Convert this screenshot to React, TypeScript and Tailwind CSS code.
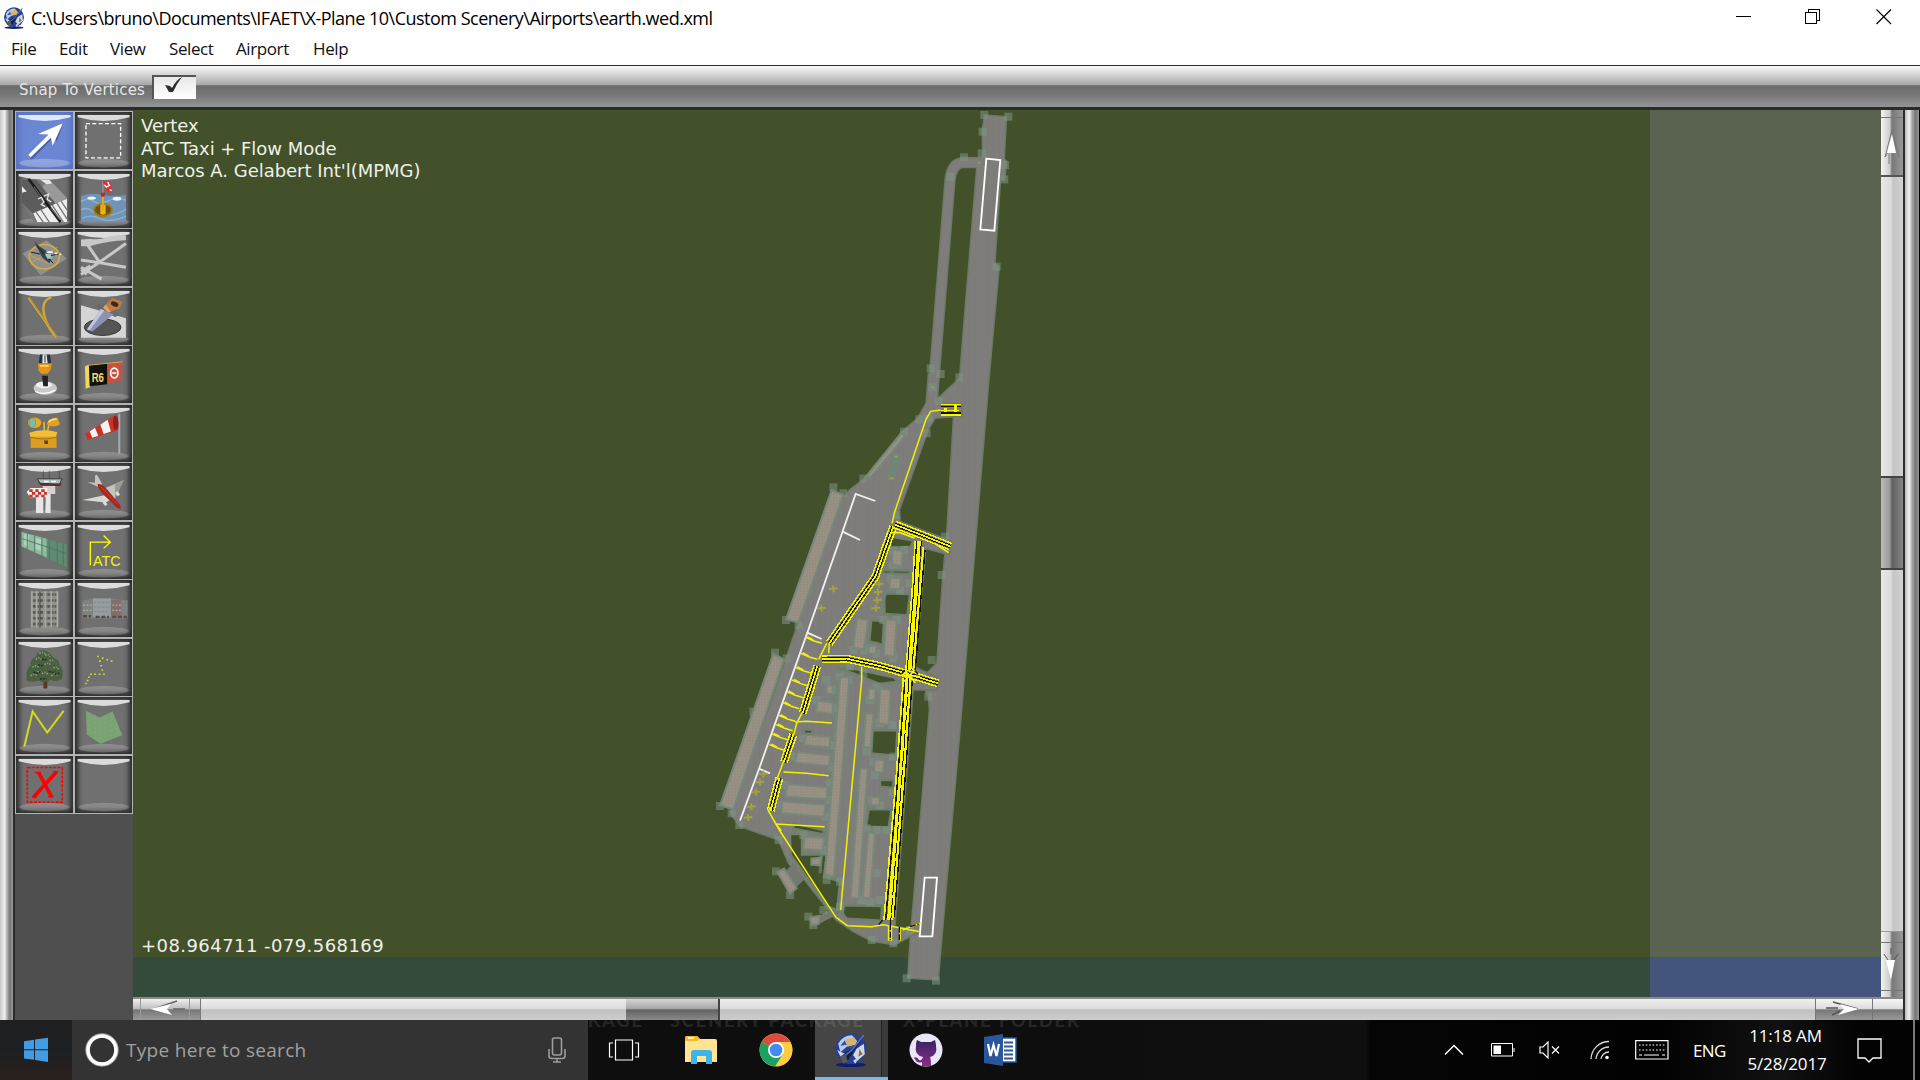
import type { ReactNode } from "react";

const MENUS = [
    { label: "File", width: "w-[48px]" },
    { label: "Edit", width: "w-[51px]" },
    { label: "View", width: "w-[59px]" },
    { label: "Select", width: "w-[67px]" },
    { label: "Airport", width: "w-[77px]" },
    { label: "Help", width: "w-[50px]" },
];

// Every tool picture is drawn in a 172 x 173 box
const TOOLS: { name: string; art: ReactNode }[] = [
    {
        name: "vertex",
        art: (
            <g>
                <path d="M43 140 L108 68 L90 62 L143 33 L122 90 L114 76 L48 144 Z" fill="#223a80" opacity=".5" />
                <path d="M37 130 L98 68 L66 67 L141 34 L110 102 L105 78 L44 137 Z" fill="#fff" />
            </g>
        ),
    },
    {
        name: "marquee",
        art: <rect x="33" y="35" width="104" height="104" fill="none" stroke="#fff" strokeWidth="4" strokeDasharray="12 7" />,
    },
    {
        name: "runway",
        art: (
            <g>
                <path d="M18 28 L100 24 L153 82 L153 155 L54 155 L18 96 Z" fill="#777" />
                <path d="M100 26 L153 82 L110 104 L70 58 Z" fill="#999" />
                <path d="M18 28 L60 26 L130 112 L52 130 L18 96 Z" fill="#5c5c5c" />
                <path d="M18 46 L32 62 L18 66 Z M72 26 L100 26 L108 38 L92 40 Z" fill="#e8e8e8" />
                <path d="M52 128 L153 84 L153 155 L64 155 Z" fill="#eee" />
                <path d="M58 122 L82 155 M74 116 L100 155 M108 102 L142 155 M122 96 L153 145 M136 92 L153 118" stroke="#777" strokeWidth="4" />
                <path d="M38 24 L134 155" stroke="#1c1c1c" strokeWidth="8" />
                <path d="M54 48 L82 86 M104 112 L132 148" stroke="#999" strokeWidth="2" />
                <path d="M66 85 l10 -5 l8 14 l-8 8 l12 6 M84 76 l14 -6 l-4 16 l12 8" fill="none" stroke="#e6e6e6" strokeWidth="4" />
            </g>
        ),
    },
    {
        name: "sealane",
        art: (
            <g>
                <path d="M18 76 Q50 64 84 72 T153 72 L153 154 L18 154 Z" fill="#6e94b8" />
                <path d="M18 92 q20 -12 38 0 t40 0 t57 -4 M18 118 q20 -10 34 4 t46 12 t55 -18 M22 144 q26 -14 50 0 t80 -6" fill="none" stroke="#91b0cb" strokeWidth="4" />
                <ellipse cx="50" cy="82" rx="13" ry="5" fill="#f0f5f8" />
                <ellipse cx="126" cy="84" rx="13" ry="6" fill="#f0f5f8" />
                <ellipse cx="84" cy="118" rx="27" ry="19" fill="#6b5316" stroke="#a37c18" strokeWidth="6" />
                <path d="M76 102 h16 v28 q-8 6 -16 0 Z" fill="#f0b512" />
                <path d="M84 76 V120" stroke="#e5a915" strokeWidth="6" />
                <path d="M76 66 h15 l-3 12 h-9 Z" fill="#b92a22" />
                <path d="M84 30 V66" stroke="#bbb" strokeWidth="2" />
                <path d="M82 28 L110 38 L108 66 L94 60 Z" fill="#df3030" />
                <path d="M98 34 l6 10 l-10 4 M88 42 l8 8 M104 56 l6 4" stroke="#fff" strokeWidth="4" fill="none" />
            </g>
        ),
    },
    {
        name: "helipad",
        art: (
            <g>
                <path d="M20 74 L92 34 L152 90 L74 140 Z" fill="#909090" />
                <ellipse cx="85" cy="84" rx="45" ry="37" fill="none" stroke="#d8ac3c" strokeWidth="5" />
                <path d="M50 100 L124 56 M46 82 L100 106" stroke="#c9a446" strokeWidth="3" />
                <path d="M54 36 L70 52 L94 68 L106 92 L100 104 L78 86 L66 60 Z" fill="#344548" />
                <path d="M72 76 L44 70 M98 82 L136 74 M60 50 L112 104" stroke="#222" strokeWidth="3" />
                <path d="M86 74 l18 2 l4 14 l-14 0 Z" fill="#a8c4cc" />
                <path d="M92 70 h18 M116 74 h8 M130 76 h6" stroke="#f4f4f4" strokeWidth="5" />
            </g>
        ),
    },
    {
        name: "taxiway",
        art: (
            <g>
                <path d="M18 32 L46 30 Q80 34 104 22 L134 18 L153 20 L153 34 L128 36 Q80 42 44 52 L18 52 Z" fill="#c8c8c8" />
                <path d="M36 46 L72 98 M153 44 L72 102 L18 138 M18 94 L72 102 L153 116 M18 116 L80 152 M18 128 L46 112" stroke="#c8c8c8" strokeWidth="9" fill="none" />
                <path d="M18 120 h30 l-16 22 Z" fill="#c8c8c8" />
            </g>
        ),
    },
    {
        name: "linear feature",
        art: (
            <g fill="none" stroke="#d3aa35" strokeWidth="7">
                <path d="M38 30 L122 150" />
                <path d="M106 28 Q76 38 84 78 Q92 116 116 144" />
                <path d="M40 30 L124 150" stroke="#8d6f1c" strokeWidth="1.5" />
            </g>
        ),
    },
    {
        name: "hole",
        art: (
            <g>
                <path d="M18 52 L153 92 L153 151 L18 151 Z" fill="#d5d5d5" />
                <path d="M60 54 L110 40 L130 84 L120 88 Z" fill="#6a6a6a" />
                <ellipse cx="83" cy="119" rx="55" ry="25" fill="#555" stroke="#333" strokeWidth="3" />
                <path d="M78 64 L116 80 L52 132 L36 126 Z" fill="#8f90b5" />
                <path d="M78 64 L88 68 L44 128 L36 126 Z" fill="#c5c6dc" />
                <path d="M92 50 L112 30 L142 42 L134 62 L106 72 Z" fill="#bd7c42" />
                <ellipse cx="119" cy="49" rx="12" ry="7" transform="rotate(24 119 49)" fill="#3b2a1d" />
                <path d="M92 50 L108 72 L100 74 L84 60 Z" fill="#e0a468" />
            </g>
        ),
    },
    {
        name: "tower viewpoint",
        art: (
            <g>
                <ellipse cx="88" cy="128" rx="35" ry="20" fill="#c9c9c9" />
                <ellipse cx="84" cy="118" rx="24" ry="10" fill="#efefef" />
                <path d="M58 138 q28 14 60 -4" fill="none" stroke="#fff" strokeWidth="4" />
                <path d="M78 90 h18 v32 h-14 Z" fill="#222" />
                <path d="M66 52 h42 l-4 20 l-10 12 h-18 l-8 -10 Z" fill="#e5961b" />
                <path d="M72 60 h26" stroke="#ffd877" strokeWidth="5" />
                <path d="M72 26 h30 l4 26 h-38 Z" fill="#26323f" />
                <path d="M80 26 h12 l3 26 h-16 Z" fill="#e4e8ec" />
                <path d="M87 28 v22" stroke="#26323f" strokeWidth="3" />
            </g>
        ),
    },
    {
        name: "sign",
        art: (
            <g>
                <path d="M30 62 L42 56 L46 124 L32 130 Z" fill="#f0d95e" />
                <path d="M34 60 L143 48" stroke="#d8b64a" strokeWidth="4" />
                <path d="M42 60 L97 54 L97 116 L44 122 Z" fill="#12120c" />
                <path d="M97 54 L143 49 L141 104 L97 115 Z" fill="#c65340" />
                <text x="50" y="108" fontSize="40" fontWeight="700" textLength="37" lengthAdjust="spacingAndGlyphs" fill="#f1dd7d" className="font-['Liberation_Sans',sans-serif]">
                    R6
                </text>
                <ellipse cx="118" cy="82" rx="11" ry="15" fill="none" stroke="#fff" strokeWidth="5" />
                <path d="M112 82 h12" stroke="#fff" strokeWidth="5" />
            </g>
        ),
    },
    {
        name: "light fixture",
        art: (
            <g>
                <path d="M84 52 L86 92 M100 56 L92 92" stroke="#e8b82f" strokeWidth="5" />
                <ellipse cx="56" cy="54" rx="20" ry="16" fill="#e8aa22" />
                <ellipse cx="49" cy="54" rx="10" ry="14" fill="#6ebfb5" stroke="#c58a16" strokeWidth="3" />
                <path d="M92 58 Q96 40 124 38 L132 58 Q112 72 92 58 Z" fill="#e3a01d" />
                <path d="M98 52 Q104 44 122 42" fill="none" stroke="#ffdb68" strokeWidth="5" />
                <path d="M40 84 Q80 70 124 82 L120 98 L44 98 Z" fill="#f3bf38" />
                <path d="M44 96 H122 V130 H44 Z" fill="#db9e1e" />
                <path d="M44 98 Q80 108 122 98" stroke="#8a5c0d" strokeWidth="2" fill="none" />
                <path d="M84 108 h12 v10 h-10 Z" fill="#59400f" />
            </g>
        ),
    },
    {
        name: "windsock",
        art: (
            <g>
                <path d="M133 26 V148" stroke="#a3acb4" strokeWidth="6" />
                <path d="M30 88 L118 32 Q134 36 130 76 L38 106 Z" fill="#c93224" />
                <path d="M44 80 L60 69 L70 93 L52 99 Z M76 60 L98 45 L108 80 L86 88 Z" fill="#f2f2f2" />
                <ellipse cx="122" cy="54" rx="8" ry="22" fill="#8c2118" />
            </g>
        ),
    },
    {
        name: "tower",
        art: (
            <g>
                <path d="M82 24 V50 M100 24 V50 M130 24 V50" stroke="#444" strokeWidth="2" />
                <path d="M60 96 H82 V152 H60 Z M90 82 H104 V152 H88 Z" fill="#e6e6e6" />
                <path d="M80 70 H118 V94 H84 Z" fill="#d2d2d2" />
                <path d="M64 48 H138 L130 66 H76 Z" fill="#a9c1c4" stroke="#333" strokeWidth="3" />
                <path d="M66 60 L138 62 L132 70 L76 68 Z" fill="#6e2924" />
                <path d="M84 56 h14 M106 56 h14" stroke="#fff" strokeWidth="5" />
                <path d="M32 88 L44 76 H94 V104 H42 Z" fill="#f5eded" />
                <path d="M40 84 h10 m8 0 h10 m8 0 h10 M48 92 h10 m8 0 h10 m8 0 h9 M40 100 h10 m8 0 h10 m8 0 h10" stroke="#c7342b" strokeWidth="8" />
            </g>
        ),
    },
    {
        name: "ramp start",
        art: (
            <g>
                <path d="M82 80 L146 52 L120 108 L104 104 Z" fill="#c4c4bc" />
                <path d="M120 64 L146 52 L120 108 Z" fill="#9b9b94" />
                <path d="M22 112 L88 98 L106 112 L92 120 Z" fill="#d9d9d2" />
                <path d="M60 38 L66 36 L82 64 L68 72 L38 58 L60 60 Z" fill="#c9c2b8" />
                <path d="M68 64 Q80 62 96 80 L136 128 L138 140 L126 136 L84 94 Q68 78 68 64 Z" fill="#a8261d" />
                <path d="M78 72 L128 126" stroke="#cf5548" strokeWidth="2" />
                <path d="M86 118 l8 10 M124 88 l8 10" stroke="#ddd" strokeWidth="9" />
            </g>
        ),
    },
    {
        name: "facade",
        art: (
            <g>
                <path d="M17 30 L153 68 L153 138 L17 74 Z" fill="#5f8b74" />
                <path d="M17 30 L92 51 L92 108 L17 74 Z" fill="#8dbaa0" />
                <path d="M24 36 L40 40 L36 76 L24 70 Z M60 48 L76 52 L74 88 L58 82 Z" fill="#abd3ba" />
                <path d="M17 50 L153 96 M34 34 V82 M56 40 V92 M78 48 V104 M100 54 V114 M124 60 V124 M142 66 V132" stroke="#48735c" strokeWidth="2.5" />
            </g>
        ),
    },
    {
        name: "atc",
        art: (
            <g>
                <path d="M46 131 V61 H105 M86 41 L106 61 L86 80" fill="none" stroke="#ffff00" strokeWidth="4" />
                <text x="54" y="132" fontSize="45" textLength="83" lengthAdjust="spacingAndGlyphs" fill="#f3f312" className="font-['Liberation_Sans',sans-serif]">
                    ATC
                </text>
            </g>
        ),
    },
    {
        name: "building",
        art: (
            <g>
                <path d="M44 34 L128 34 L128 142 L44 144 Z" fill="#8f918a" />
                <path d="M50 44 h72 M50 62 h72 M50 80 h72 M50 98 h72 M50 116 h72 M50 134 h72" stroke="#585b57" strokeWidth="8" strokeDasharray="9 5 5 3" />
                <path d="M48 34 V144 M62 34 V144 M88 34 V144 M106 34 V144 M124 34 V144" stroke="#acaea5" strokeWidth="4" />
                <path d="M72 36 V144" stroke="#444" strokeWidth="3" />
            </g>
        ),
    },
    {
        name: "agp building",
        art: (
            <g>
                <path d="M22 62 L54 56 L112 56 L158 62 V116 H22 Z" fill="#80827f" />
                <path d="M54 56 H108 V112 H54 Z" fill="#969da2" />
                <path d="M108 60 H138 V112 H108 Z" fill="#846e6b" />
                <path d="M56 68 h50 M56 82 h50 M56 96 h50" stroke="#868e94" strokeWidth="4" strokeDasharray="8 4" />
                <path d="M24 76 h28 M24 92 h28 M112 76 h26 M112 92 h26" stroke="#a9a9a5" strokeWidth="4" strokeDasharray="6 4" />
                <path d="M24 110 h24 M62 112 h40 M112 112 h44" stroke="#574d47" strokeWidth="7" strokeDasharray="12 5" />
            </g>
        ),
    },
    {
        name: "forest",
        art: (
            <g>
                <path d="M84 110 h10 v40 h-12 Z" fill="#5b3723" />
                <path d="M32 112 Q30 90 44 82 Q40 62 58 56 Q66 34 84 34 Q104 38 112 58 Q130 60 130 78 Q146 92 138 122 Q122 132 104 124 Q86 136 68 126 Q48 134 32 126 Z" fill="#4b6041" />
                <path
                    d="M60 62 q8 -10 16 0 M88 50 q8 -8 14 4 M50 86 q10 -10 20 2 M86 78 q10 -10 20 2 M112 88 q10 -8 16 4 M44 112 q10 -10 20 0 M78 106 q10 -10 18 2 M106 112 q10 -10 20 0 M70 44 q10 -6 18 0 M64 100 q8 -4 12 0 M100 66 q10 -4 16 2"
                    fill="none"
                    stroke="#8b9e83"
                    strokeWidth="5"
                    strokeDasharray="4 4"
                />
                <path d="M66 78 q8 6 18 0 M52 100 q14 8 22 -2 M98 98 q12 6 20 0 M72 122 q10 -4 20 0 M78 60 q8 6 14 2 M116 106 q10 2 14 -4" fill="none" stroke="#26371f" strokeWidth="5" strokeDasharray="6 3" />
            </g>
        ),
    },
    {
        name: "string",
        art: (
            <path
                d="M69 53h.1M83 58h.1M97 63h.1M110 67h.1M75 67h.1M79 81h.1M82 94h.1M87 107h.1M74 107h.1M60 107h.1M48 107h.1M42 116h.1M38 126h.1M33 135h.1"
                stroke="#d5dc22"
                strokeWidth="5"
                strokeLinecap="square"
            />
        ),
    },
    {
        name: "line",
        art: <path d="M25 150 L50 44 L94 108 L143 42" fill="none" stroke="#cfdc22" strokeWidth="6" />,
    },
    {
        name: "polygon",
        art: (
            <g>
                <path d="M33 42 L74 62 L113 43 L142 116 L76 142 L35 114 Z" fill="#7aa273" />
                <path d="M44 54 V112 M60 62 V126 M76 66 V136 M92 60 V132 M108 56 V124 M124 80 V118" stroke="#84aa7d" strokeWidth="3" strokeDasharray="8 6" />
            </g>
        ),
    },
    {
        name: "exclusion",
        art: (
            <g>
                <rect x="34" y="35" width="105" height="105" fill="none" stroke="#f00" strokeWidth="5" strokeDasharray="9 4" />
                <path d="M68 50 L107 124 M122 48 L52 126" stroke="#f00" strokeWidth="11" />
                <path d="M56 50 h18 M110 48 h18 M48 124 h16 M96 124 h18" stroke="#f00" strokeWidth="4" />
            </g>
        ),
    },
    { name: "blank", art: null },
];

const VERTEX_MARKS = [
    [913, -795], [985, -790], [908, -745], [905, -680], [852, -668], [812, -610], [975, -645], [973, -602], [950, -340],
    [752, -35], [782, -18], [838, -8], [758, 22], [776, 62], [745, 115], [718, 118], [672, 155], [740, 160], [550, 296],
    [460, 322], [490, 340], [650, 405], [318, 720], [356, 735], [285, 818], [320, 835], [220, 995], [120, 1278],
    [178, 1335], [155, 1300], [296, 1380], [330, 1545], [288, 1474], [575, 1680], [640, 1690], [680, 1795], [768, 1802],
    [785, 585], [795, 470], [640, 510], [672, 510], [640, 555], [632, 596], [660, 630], [690, 610], [520, 810], [552, 812],
    [610, 720], [650, 720], [640, 835], [570, 805], [588, 820], [440, 900], [455, 930], [410, 960], [460, 985], [590, 920],
    [638, 1035], [600, 1030], [570, 960], [560, 1115], [580, 1145], [640, 1130], [585, 1185], [575, 1260], [600, 1275],
    [640, 1240], [560, 1345], [590, 1350], [620, 1350], [590, 1480], [545, 1560], [570, 1565], [600, 1560], [455, 1095],
    [455, 1160], [450, 1210], [448, 1260], [440, 1310], [370, 1365], [435, 1410], [405, 1445], [440, 1500], [480, 1505],
    [400, 1635], [385, 1610], [430, 1590], [480, 1580], [690, 1650], [745, 950], [755, 840], [510, 860], [550, 880],
    [370, 1075], [345, 1130], [315, 1215], [305, 1275], [480, 890], [505, 900],
];

const BUILDINGS = [
    "455,330 490,345 355,728 318,718",
    "280,822 312,838 160,1288 120,1276",
    "665,158 676,168 572,292 556,292",
    "636,508 668,512 666,558 636,554",
    "630,592 662,594 660,628 628,626",
    "530,715 565,720 552,808 520,804",
    "617,718 650,720 643,830 612,825",
    "566,798 588,796 590,820 564,822",
    "480,890 508,892 462,1490 435,1484",
    "600,925 632,930 626,1034 595,1030",
    "566,925 588,926 584,962 563,960",
    "557,1000 580,1002 572,1104 551,1100",
    "540,1164 563,1166 536,1556 512,1552",
    "565,1356 585,1360 570,1556 548,1552",
    "584,1138 612,1140 610,1178 582,1176",
    "572,1250 600,1252 598,1276 572,1276",
    "378,1064 450,1070 450,1102 372,1096",
    "352,1116 450,1126 448,1158 344,1148",
    "322,1212 442,1222 440,1258 316,1250",
    "306,1264 436,1274 432,1310 304,1300",
    "374,1370 432,1374 428,1412 370,1408",
    "412,962 460,968 458,1002 408,996",
    "440,915 460,918 458,942 438,940",
    "394,1436 424,1432 420,1456 394,1454",
    "292,1476 312,1466 350,1524 330,1542",
    "390,1612 418,1608 416,1632 394,1636",
];

// Grass islands enclosed by the pavement
const ISLANDS = [
    "632,470 700,482 692,500 630,504",
    "610,570 690,572 690,582 608,580",
    "612,640 690,642 682,706 614,702",
    "574,720 612,724 608,796 594,790 568,784",
    "470,864 520,866 640,892 655,905 600,912 520,880",
    "578,1050 652,1052 648,1128 574,1120",
    "600,1200 640,1200 640,1224 600,1220",
    "566,1288 634,1288 626,1342 558,1340",
    "492,1576 606,1578 604,1622 500,1616 488,1600",
    "330,1362 366,1362 366,1424 440,1424 432,1490 480,1504 472,1590 444,1580 332,1424",
    "372,1048 398,1050 396,1062 372,1060",
    "340,1330 436,1352 436,1364 340,1346",
];

// Gate leads between the apron edge and the inner taxi line
const GATES = [
    [376, 772], [362, 820], [346, 862], [336, 900], [320, 935], [308, 968], [296, 1006], [288, 1034], [276, 1062], [268, 1094],
];

const PARKED = [[460, 626], [424, 684], [587, 684], [597, 612], [594, 636], [592, 660], [250, 1182], [240, 1206], [228, 1236], [214, 1280], [204, 1312]];

function TaxiRoute({ d }: { d: string }) {
    return (
        <g fill="none" shapeRendering="crispEdges">
            <path d={d} stroke="#f6f600" strokeWidth="24" />
            <path d={d} stroke="#7b7b55" strokeWidth="16" />
            <path d={d} stroke="#111100" strokeWidth="11" />
            <path d={d} stroke="#f6f600" strokeWidth="5" />
        </g>
    );
}

// The parallel taxiway carries several routes side by side
function ParallelTaxiway() {
    return (
        <g fill="none" shapeRendering="crispEdges">
            <path d="M720 482 L710 640 L689 870 M684 895 L662 1200 L626 1625" stroke="#78786c" strokeWidth="32" />
            <path d="M706 482 L696 640 L678 870 M670 895 L648 1200 L612 1620" stroke="#f6f600" strokeWidth="5" />
            <path d="M710 482 L701 640 L682 870 M675 895 L653 1200 L617 1620" stroke="#111100" strokeWidth="4" />
            <path d="M718 482 L708 640 L689 870 M683 895 L661 1200 L627 1620" stroke="#f6f600" strokeWidth="12" />
            <path d="M724 482 L714 640 L695 870 M687 895 L665 1200 L631 1640" stroke="#111100" strokeWidth="3" strokeDasharray="46 9" />
            <path d="M730 500 L719 640 L700 870 M692 895 L670 1200 L637 1620" stroke="#f6f600" strokeWidth="6" />
            <path d="M735 510 L724 640 L706 870 M697 900 L675 1200 L643 1610" stroke="#111100" strokeWidth="4" />
        </g>
    );
}

function AirportMap() {
    return (
        <svg viewBox="133 110 1748 887" className="block h-full w-full">
            <defs>
                <pattern id="grooves" width="18" height="18" patternUnits="userSpaceOnUse">
                    <rect width="18" height="18" fill="#7f7d7b" />
                    <path d="M5 0 V18" stroke="#787d77" strokeWidth="4" />
                </pattern>
                <pattern id="roof" width="9" height="9" patternUnits="userSpaceOnUse">
                    <rect width="9" height="9" fill="#999184" />
                    <path d="M0 0 h5 v5 h-5 Z" fill="#948b81" />
                </pattern>
            </defs>
            <rect x="133" y="110" width="1517" height="847" fill="#43512a" />
            <rect x="1650" y="110" width="231" height="847" fill="#596350" />
            <rect x="133" y="957" width="1517" height="40" fill="#344b3b" />
            <rect x="1650" y="957" width="231" height="40" fill="#44557d" />

            <g transform="translate(680 380) scale(0.33333)">
                <g fill="url(#grooves)" stroke="#6b7a66" strokeWidth="4" strokeLinejoin="round">
                    <path d="M758 50 L810 -600 Q815 -650 850 -653 L910 -652" fill="none" strokeWidth="34" />
                    <polygon points="913,-795 980,-790 973,-665 980,-655 974,-600 962,-600 945,-350 958,-340 927,0 843,1020 775,1800 683,1795 690,1680 748,990 745,950 735,930 708,920 706,884 744,876 770,850 788,590 800,460 820,112 780,108 768,60 838,-5 890,-640 908,-675 906,-745" />
                    <polygon points="745,-20 772,-20 768,60 785,70 845,70 845,108 765,115 745,150 655,400 662,425 740,455 812,482 808,525 738,506 705,860 775,895 770,930 700,930 645,1640 690,1645 722,1625 715,1660 690,1670 645,1695 575,1684 520,1655 470,1622 365,1490 325,1450 295,1380 180,1340 150,1300 275,960 350,740 480,370 508,330 560,290 665,155 712,115 738,70" />
                </g>
                <path d="M758 50 L810 -600 Q815 -650 850 -653 L910 -652" fill="none" stroke="#7f7d7b" strokeWidth="26" />
                <path d="M300 1490 L340 1450 L372 1500 L340 1530 Z M400 1620 L470 1575 L480 1600 L410 1635 Z" fill="#74796f" />

                {ISLANDS.map((points) => (
                    <polygon key={points} points={points} fill="#43512a" stroke="#6f806d" strokeWidth="7" />
                ))}
                <path d="M650 235 L635 285" stroke="#6f8876" strokeWidth="24" strokeLinecap="round" />
                <path d="M470 900 L420 1480 M555 960 L520 1300 M385 940 L400 960 M640 560 L600 700" fill="none" stroke="#6f8376" strokeWidth="9" opacity=".7" />
                {VERTEX_MARKS.map(([x, y]) => (
                    <rect key={`${x}-${y}`} x={x - 12} y={y - 12} width="24" height="24" fill="#7d9683" opacity=".55" />
                ))}
                {BUILDINGS.map((points) => (
                    <polygon key={points} points={points} fill="url(#roof)" stroke="#768878" strokeWidth="6" />
                ))}

                {/* Runway thresholds */}
                <g fill="none" stroke="#fff" strokeWidth="5.5">
                    <polygon points="919,-664 961,-660 943,-448 901,-452" />
                    <polygon points="734,1493 771,1493 757,1669 719,1669" />
                    <path d="M586 363 L527 342 L382 758 L425 777 M488 455 L540 480 M382 758 L236 1170 L180 1322 M236 1166 L270 1180" stroke="#f0f0ee" />
                </g>

                <ParallelTaxiway />
                <TaxiRoute d="M640 440 L625 480 L586 590 L448 790" />
                <TaxiRoute d="M645 434 L738 470 L812 500" />
                <TaxiRoute d="M412 858 L368 1000" />
                <TaxiRoute d="M340 1064 L312 1146 M298 1194 L272 1292" />
                <TaxiRoute d="M425 838 L500 836 L600 858 L690 884 L774 910" />
                <path d="M636 458 L660 458 L704 474 M764 490 L806 518" stroke="#f6f600" strokeWidth="5" fill="none" />
                <g fill="none" shapeRendering="crispEdges">
                    <path d="M782 74 H844 M782 92 H836 M782 106 H844" stroke="#f6f600" strokeWidth="5" />
                    <path d="M782 80 H842 M782 99 H842" stroke="#111100" strokeWidth="4" />
                    <path d="M796 84 V96 M828 72 V96" stroke="#f6f600" strokeWidth="9" />
                </g>
                <g fill="none" stroke="#f2f200" strokeWidth="4.5">
                    <path d="M782 90 L752 94 L738 118 L644 396 L636 430" />
                    <path d="M448 785 L446 820 M440 790 L416 838 M368 995 L350 1030 L340 1070 M312 1140 L290 1200" />
                    <path d="M272 1280 L265 1292 L298 1350 L468 1612 L502 1637 L575 1640 L610 1634 L720 1655 M668 1650 L724 1628" />
                    <path d="M545 860 L545 900 L482 1590" />
                    <path d="M346 1026 L380 1024 L456 1029 M310 1176 L380 1180 L446 1187 M286 1332 L434 1340 M290 1335 L304 1352" />
                    {GATES.map(([x, y]) => (
                        <path key={y} d={`M${x} ${y} l26 11 l24 7 M${x + 6} ${y - 2} l18 10`} />
                    ))}
                    <path d="M626 1636 V1682 M634 1636 V1682 M660 1646 V1682" strokeWidth="5" />
                </g>
                <path d="M631 1632 V1680 M658 1640 V1684 M690 1640 L716 1632" stroke="#111" strokeWidth="4" strokeDasharray="18 5" />
                <path d="M608 1620 l-12 14 M674 870 l-10 14 M702 870 l12 12" stroke="#111" strokeWidth="4" />
                {/* Routes crossing at the middle junction */}
                <path d="M664 884 L720 890 M676 872 L706 908 M704 870 L672 904" stroke="#f6f600" strokeWidth="5" />
                <path
                    d={PARKED.map(([x, y]) => `M${x - 13} ${y + 1}L${x + 13} ${y - 1}M${x - 1} ${y - 10}L${x + 1} ${y + 11}`).join("")}
                    stroke="#a3a33c"
                    strokeWidth="6"
                />
                <path d="M644 230h10M628 295h14M894 -652h8M754 22h8" stroke="#97a347" strokeWidth="5" />
            </g>
        </svg>
    );
}

function GlobeIcon({ size }: { size: number }) {
    return (
        <svg width={size} height={size} viewBox="0 0 32 32">
            <ellipse cx="16" cy="30" rx="14" ry="2" fill="#111d75" />
            <circle cx="16" cy="15" r="14.5" fill="#27408f" />
            <path d="M4 10 Q8 2 17 2 L22 8 L13 12 L6 18 Z" fill="#b9cbe4" />
            <path d="M10 6 L19 4 L22 11 L12 13 Z" fill="#d6b36f" />
            <path d="M6 12 l4 -5 l2 4 Z M14 13 l6 -2 l-4 5 Z" fill="#2f52b8" />
            <path d="M21 15 L28 10 L29 20 L22 26 L18 21 Z" fill="#cfdbe6" />
            <path d="M3 16 L11 20 L8 26 Z M18 26 L24 22 L20 29 Z" fill="#c8d6ea" />
            <path d="M24 15 l3 5 l-4 2 Z" fill="#9a6b3b" />
            <path d="M28 3 L20 15 L11 29 L5 23 L17 14 Z" fill="#171c3d" />
            <path d="M28 2 L17 16 L8 23" stroke="#5972c0" strokeWidth="1.5" fill="none" />
            <path d="M5 22 L11 20 L13 27 L9 29 Z" fill="#555961" />
        </svg>
    );
}

function TitleBar() {
    return (
        <div className="flex h-[36px] items-center pl-[3px] text-black">
            <GlobeIcon size={22} />
            <span className="ml-[6px] w-[684px] whitespace-nowrap font-['Open_Sans','Noto_Sans',sans-serif] text-[18px] tracking-[-0.5px]">
                C:\Users\bruno\Documents\IFAET\X-Plane 10\Custom Scenery\Airports\earth.wed.xml
            </span>
            <div className="ml-auto flex h-full gap-[54px] pr-[28px] pt-[8px]">
                <svg width="16" height="17" viewBox="0 0 16 17" fill="none" stroke="#000" shapeRendering="crispEdges">
                    <path d="M0 8.5 H15" />
                </svg>
                <svg width="16" height="17" viewBox="0 0 16 17" fill="none" stroke="#000" shapeRendering="crispEdges" className="-ml-px mr-px">
                    <path d="M.5 4.5 H11.5 V15.5 H.5 Z M3.5 4 V1.5 H14.5 V12.5 H12" />
                </svg>
                <svg width="16" height="17" viewBox="0 0 16 17" fill="none" stroke="#000" strokeWidth="1.2">
                    <path d="M.5 1.5 L15 16 M15 1.5 L.5 16" />
                </svg>
            </div>
        </div>
    );
}

function MenuBar() {
    return (
        <div className="flex h-[29px] pl-[11px] font-['Open_Sans','Noto_Sans',sans-serif] text-[17px] leading-[26px] tracking-[-0.4px] text-[#101018]">
            {MENUS.map((menu) => (
                <span key={menu.label} className={menu.width}>
                    {menu.label}
                </span>
            ))}
        </div>
    );
}

function SnapBar() {
    return (
        <div className="flex h-[45px] items-start border-b-[3px] border-t border-[#2b2b2b] bg-[linear-gradient(#fafafa_0%,#e4e4e4_12%,#a8a8a8_46%,#6b6b6b_48%,#777_70%,#929292_97%)] pl-[19px]">
            <span className="mt-[14px] w-[133px] whitespace-nowrap font-['DejaVu_Sans',sans-serif] text-[15px] leading-[20px] tracking-[0.2px] text-[#e6e6e6]">
                Snap To Vertices
            </span>
            <div className="mt-[9px] h-[24px] w-[44px] border-l-2 border-t-2 border-[#555] bg-gradient-to-b from-[#e8e8e8] to-white">
                <svg width="40" height="20" viewBox="0 0 40 20">
                    <path d="M11 8 L16 9 L18 11 Q22 3 28 0 Q23 6 19 15 L15 15 Z" fill="#2d2d2d" />
                </svg>
            </div>
        </div>
    );
}

function ToolButton({ art, active }: { art: ReactNode; active: boolean }) {
    return (
        <div
            className={
                active
                    ? "bg-[#6b86d2] shadow-[inset_0_0_7px_1px_#4e68b5]"
                    : "bg-[#707070] shadow-[inset_0_0_5px_3px_#292929]"
            }
        >
            <svg viewBox="0 0 172 173" preserveAspectRatio="none" className="block h-full w-full">
                <ellipse cx="86" cy="155" rx="76" ry="13" fill="#fff" opacity={active ? ".25" : ".2"} />
                <path d="M8 9 H164 V16 Q86 38 8 16 Z" fill={active ? "#dfe7fb" : "#dcdcdc"} />
                {art}
            </svg>
        </div>
    );
}

function ToolPalette() {
    return (
        <div className="w-[118px] bg-[#4f4f4f] pt-px">
            <div className="grid h-[703px] w-[118px] grid-cols-2 grid-rows-12 gap-[1.5px] border border-[#b3b3b3] bg-[#b3b3b3]">
                {TOOLS.map((tool, i) => (
                    <ToolButton key={tool.name} art={tool.art} active={i === 0} />
                ))}
            </div>
        </div>
    );
}

function VerticalScroll() {
    return (
        <div className="flex w-[22px] flex-col">
            <div className="h-[67px] border-b-2 border-[#555] bg-[linear-gradient(90deg,#f5f5f5,#ccc_40%,#777_50%,#999)]">
                <svg width="22" height="65" viewBox="0 0 22 65">
                    <path d="M0 7.5 H22" stroke="#777" />
                    <path d="M11 20 L4 47 L8 41 V54 M11 20 L18 47" stroke="#777" fill="none" />
                    <path d="M11 24 L15 43 H6 Z" fill="#fff" />
                </svg>
            </div>
            <div className="h-[299px] bg-[linear-gradient(90deg,#e8e8e8,#dcdcdc_45%,#c4c4c4_55%,#d2d2d2)]" />
            <div className="h-[94px] border-y-2 border-[#444] bg-[linear-gradient(90deg,#bbb,#999_40%,#606060_50%,#858585)]" />
            <div className="flex-1 bg-[linear-gradient(90deg,#e8e8e8,#dcdcdc_45%,#c4c4c4_55%,#d2d2d2)]" />
            <div className="h-[66px] border-t border-[#999] bg-[linear-gradient(90deg,#f5f5f5,#ccc_40%,#777_50%,#999)]">
                <svg width="22" height="65" viewBox="0 0 22 65">
                    <path d="M0 10.5 H22 M0 58.5 H22" stroke="#777" />
                    <path d="M3 22 L7 28 M17 22 L13 28 M10 16 V22" stroke="#555" fill="none" />
                    <path d="M10 48 L5 28 H14 Z" fill="#fff" />
                </svg>
            </div>
        </div>
    );
}

function HorizontalScroll() {
    return (
        <div className="flex h-[23px] border-t-2 border-[#8a8a8a]">
            <div className="w-[68px] border-r border-[#777] bg-[linear-gradient(#f0f0f0,#c0c0c0_45%,#777_52%,#999)]">
                <svg width="66" height="21" viewBox="0 0 66 21">
                    <path d="M7.5 0 V21 M56.5 0 V21" stroke="#999" />
                    <path d="M44 2 L18 11 M40 10 H52" stroke="#666" strokeWidth="1.5" fill="none" />
                    <path d="M17 10 L38 5 L34 10 L39 16 Z" fill="#fff" />
                </svg>
            </div>
            <div className="w-[425px] bg-[linear-gradient(#efefef,#dcdcdc_45%,#c0c0c0_52%,#cdcdcd)]" />
            <div className="w-[94px] border-r-2 border-[#444] bg-[linear-gradient(#d5d5d5,#a8a8a8_45%,#626262_52%,#8a8a8a)]" />
            <div className="flex-1 bg-[linear-gradient(#efefef,#dcdcdc_45%,#c0c0c0_52%,#cdcdcd)]" />
            <div className="w-[88px] border-l border-[#777] bg-[linear-gradient(#f5f5f5,#ddd_45%,#777_52%,#999)]">
                <svg width="87" height="21" viewBox="0 0 87 21">
                    <path d="M56.5 0 V21" stroke="#777" />
                    <path d="M17 3 L42 10 M10 9 H22 M16 16 L24 12" stroke="#555" strokeWidth="1.5" fill="none" />
                    <path d="M43 10 L24 5 L28 10 L22 16 Z" fill="#fff" />
                </svg>
            </div>
        </div>
    );
}

function Workspace() {
    return (
        <div className="flex h-[910px] bg-[#2b2b2b]">
            <div className="mr-[2px] w-[13px] bg-[linear-gradient(90deg,#c8c8c8,#f0f0f0_35%,#b0b0b0_55%,#777_75%,#999)]" />
            <ToolPalette />
            <div className="flex flex-1 flex-col">
                <div className="flex h-[887px]">
                    <div className="relative w-[1748px]">
                        <AirportMap />
                        <div className="absolute left-[8px] top-[5px] whitespace-nowrap font-['DejaVu_Sans',sans-serif] text-[18px] leading-[22.6px] tracking-[-0.03px] text-[#eef0ea]">
                            <p>Vertex</p>
                            <p>ATC Taxi + Flow Mode</p>
                            <p>Marcos A. Gelabert Int'l(MPMG)</p>
                        </div>
                        <p className="absolute left-[8px] top-[825px] whitespace-nowrap font-['DejaVu_Sans',sans-serif] text-[18px] leading-[22px] tracking-[0.44px] text-[#eef0ea]">
                            +08.964711 -079.568169
                        </p>
                    </div>
                    <VerticalScroll />
                </div>
                <HorizontalScroll />
            </div>
            <div className="ml-[2px] w-[15px] border-r border-black bg-[linear-gradient(90deg,#bbb,#f0f0f0_30%,#aaa_50%,#777_75%,#999)]" />
        </div>
    );
}

function ChromeIcon() {
    return (
        <svg width="34" height="34" viewBox="0 0 34 34">
            <circle cx="17" cy="17" r="16.5" fill="#ffcd42" />
            <path d="M17 17 L2.7 8.8 A16.5 16.5 0 0 1 31.3 9 Z" fill="#dd4b3e" />
            <path d="M17 17 L2.7 8.8 A16.5 16.5 0 0 0 16 33.4 L24 21 Z" fill="#1aa260" />
            <path d="M17 9 H31.3 A16.5 16.5 0 0 1 17.5 33.5 L24 21 Z" fill="#ffcd42" />
            <circle cx="17" cy="17" r="8" fill="#fff" />
            <circle cx="17" cy="17" r="6.3" fill="#4688f4" />
        </svg>
    );
}

function Taskbar() {
    return (
        <div className="relative flex h-[60px] overflow-hidden bg-[linear-gradient(90deg,#0d0d0d_0px,#0f0f0f_1366px,#050505_1370px,#020202_1660px,#111_1780px,#030303_1860px)] font-['Open_Sans','Noto_Sans',sans-serif] text-white">
            <div className="flex w-[72px] items-center justify-center bg-[linear-gradient(#201e1e,#1c2023_45%,#291f1c)]">
                <svg width="26" height="26" viewBox="0 0 26 26" fill="#429ce3">
                    <path d="M1 4.2 L11 2.8 V12.3 H1 Z M12 2.6 L25 .7 V12.3 H12 Z M1 13.3 H11 V22.8 L1 21.4 Z M12 13.3 H25 V25 L12 23.1 Z" />
                </svg>
            </div>
            <div className="flex w-[516px] items-center bg-[#333]">
                <svg width="34" height="34" viewBox="0 0 34 34" className="ml-[13px]">
                    <circle cx="17" cy="17" r="14.5" fill="none" stroke="#999" strokeWidth="4.5" />
                    <circle cx="17" cy="17" r="14" fill="none" stroke="#fff" strokeWidth="3.5" />
                </svg>
                <span className="ml-[7px] pt-px text-[19px] tracking-[0.3px] text-[#a0a0a0]">Type here to search</span>
                <svg width="18" height="26" viewBox="0 0 18 26" fill="none" stroke="#9d9d9d" strokeWidth="1.6" className="ml-auto mr-[22px]">
                    <rect x="4.5" y="1" width="9" height="17" rx="2" />
                    <path d="M1 12 V19 Q1 21.5 4 21.5 H14 Q17 21.5 17 19 V12 M9 21.5 V25 M5 25 H13" />
                </svg>
            </div>
            <div className="flex w-[73px] items-center justify-center pr-px">
                <svg width="32" height="22" viewBox="0 0 32 22" fill="none" stroke="#fff" strokeWidth="1.2">
                    <path d="M7.5 1 H24.5 V21 H7.5 Z M5 4 H1.5 V18 H5 M27 4 H30.5 V18 H27" />
                </svg>
            </div>
            <div className="flex w-[79px] items-center justify-center">
                <svg width="34" height="30" viewBox="0 0 34 30">
                    <path d="M1 3 Q1 1 3 1 H13 L16 4 H31 Q33 4 33 6 V27 H1 Z" fill="#ffe493" />
                    <path d="M1 3 Q1 1 3 1 H13 L16 4 L13 6 H1 Z" fill="#f5b928" />
                    <path d="M4 3 h6" stroke="#fff" strokeWidth="1.5" />
                    <path d="M7 29 V18 Q7 15 10 15 H25 Q28 15 28 18 V29 H22 V21 H13 V29 Z" fill="#3fb4ea" />
                </svg>
            </div>
            <div className="flex w-[75px] items-center justify-center pr-[3px]">
                <ChromeIcon />
            </div>
            <div className="flex w-[73px] items-center border-b-[3px] border-[#76b9ed] bg-[linear-gradient(90deg,#454545_66px,#222_66px,#222_67px,#3a3a3a_67px)] pl-[19px] pt-[3px]">
                <GlobeIcon size={34} />
            </div>
            <div className="flex w-[76px] items-center justify-center">
                <svg width="34" height="34" viewBox="0 0 34 34">
                    <defs>
                        <linearGradient id="cat" x2="0" y2="1">
                            <stop stopColor="#37235f" />
                            <stop offset="1" stopColor="#8a2b8d" />
                        </linearGradient>
                    </defs>
                    <circle cx="17" cy="17" r="16.5" fill="#e9e6f6" />
                    <path d="M8 7 L12 9 H22 L26 7 Q27 11 27 13 Q29 22 21 24 Q22 26 22 33 H13 V29 Q8 31 6 26 L4.5 25 Q8 23 10 27 Q12 28 13 26 L14 24 Q5 22 7 13 Q7 9 8 7 Z" fill="url(#cat)" />
                </svg>
            </div>
            <div className="flex w-[74px] items-center justify-center pr-[2px]">
                <svg width="33" height="32" viewBox="0 0 33 32">
                    <path d="M18 4 H32 V28 H18 Z" fill="#fff" stroke="#2b579a" strokeWidth="1.5" />
                    <path d="M20 8.5 H29 M20 12.5 H29 M20 16.5 H29 M20 20.5 H29 M20 24.5 H29" stroke="#2b579a" strokeWidth="2" />
                    <path d="M0 3 L19 0 V32 L0 29 Z" fill="#2b579a" />
                    <path d="M4 10 L6.5 22 L9.5 11 L12.5 22 L15 10" fill="none" stroke="#fff" strokeWidth="2.2" />
                </svg>
            </div>
            <div className="ml-auto flex items-center">
                <svg width="20" height="12" viewBox="0 0 20 12" fill="none" stroke="#fff" strokeWidth="1.5" className="mr-[27px]">
                    <path d="M1 10.5 L10 1.5 L19 10.5" />
                </svg>
                <svg width="24" height="14" viewBox="0 0 24 14" fill="none" stroke="#fff" className="mr-[24px]">
                    <path d="M.5 .5 H21.5 V13 H.5 Z M23 5 V9" />
                    <path d="M2.5 2.5 H10 V11 H2.5 Z" fill="#fff" stroke="none" />
                </svg>
                <svg width="22" height="18" viewBox="0 0 22 18" fill="none" stroke="#fff" strokeWidth="1.2" className="mr-[29px]">
                    <path d="M1 6 H4 L9 1 V17 L4 12 H1 Z M13 5.5 L20 12.5 M20 5.5 L13 12.5" />
                </svg>
                <svg width="20" height="20" viewBox="0 0 20 20" fill="none" stroke="#ddd" strokeWidth="1.3" className="mr-[25px]">
                    <path d="M1 19 A18 18 0 0 1 19 1.5 M6 19 A13 13 0 0 1 19 7 M11 19 A8 8 0 0 1 19 12" />
                    <circle cx="17" cy="17.5" r="1.8" fill="#fff" stroke="none" />
                </svg>
                <svg width="34" height="20" viewBox="0 0 34 20" fill="none" stroke="#fff" strokeWidth="1.2" className="mr-[24px]">
                    <path d="M.7 .7 H33 V19 H.7 Z" />
                    <path d="M4 5 H30 M4 10 H30" strokeDasharray="1.6 1.8" />
                    <path d="M4 15 H7 M9 15 H24 M27 15 H30" />
                </svg>
                <span className="w-[45px] pt-px text-[17px] tracking-[-0.6px]">ENG</span>
                <div className="w-[98px] text-center text-[17px] leading-[28px] tracking-[-0.15px]">
                    <p className="pr-[3px]">11:18 AM</p>
                    <p className="-mr-1 pr-[4px]">5/28/2017</p>
                </div>
                <svg width="25" height="25" viewBox="0 0 25 25" fill="none" stroke="#fff" strokeWidth="1.3" className="ml-[21px] mr-[31px]">
                    <path d="M1 1 H24 V20 H16 L12 24 L8 20 H1 Z" />
                </svg>
                <div className="h-[60px] w-[7px] border-l-2 border-[#777]" />
            </div>

            {/* Launcher captions showing through the translucent bar */}
            <div className="pointer-events-none absolute left-[588px] top-[-10px] flex whitespace-pre font-['Lato',sans-serif] text-[18px] font-bold leading-[20px] tracking-[2px] text-white/10">
                <span className="w-[82px]">KAGE</span>
                <span className="w-[233px]">SCENERY PACKAGE</span>
                <span>X-PLANE FOLDER</span>
            </div>
        </div>
    );
}

export default function App() {
    return (
        <div className="h-[1080px] w-[1920px] overflow-hidden bg-white">
            <TitleBar />
            <MenuBar />
            <SnapBar />
            <Workspace />
            <Taskbar />
        </div>
    );
}
